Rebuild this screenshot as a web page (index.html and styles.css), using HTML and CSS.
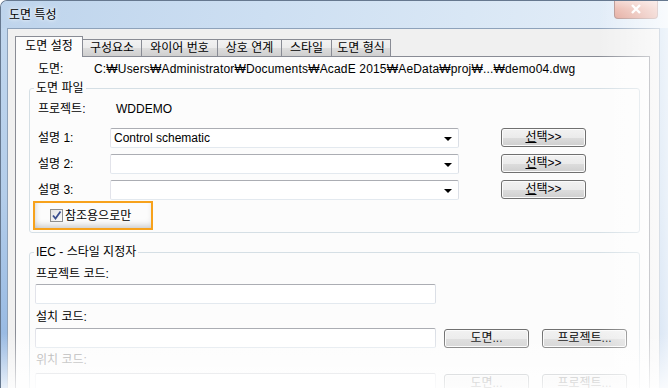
FILE: index.html
```html
<html>
  <head>
    <meta charset="UTF-8" />
    <link rel="stylesheet" href="styles.css">
  </head>
  <body>
    <div class="window">
      <div class="titlebar">
        <span class="title">도면 특성</span>
        <div class="close">
          <svg width="12" height="10" viewBox="0 0 12 10"><path d="M2 1 L10 9 M10 1 L2 9" stroke="#fff" stroke-width="2.4" /></svg>
        </div>
      </div>
      <div class="client">
        <div class="tabs">
          <div class="tab active w1">도면 설정</div>
          <div class="tab w2">구성요소</div>
          <div class="tab w3">와이어 번호</div>
          <div class="tab w4">상호 연계</div>
          <div class="tab w5">스타일</div>
          <div class="tab w6">도면 형식</div>
        </div>
        <div class="page">
          <div class="pathRow">
            <span class="pathLabel">도면:</span>
            <span class="pathValue">C:₩Users₩Administrator₩Documents₩AcadE 2015₩AeData₩proj₩...₩demo04.dwg</span>
          </div>

          <fieldset class="group">
            <legend>도면 파일</legend>
            <div class="projectRow">
              <span class="projectLabel">프로젝트:</span>
              <span>WDDEMO</span>
            </div>
            <div class="descRow first">
              <span class="descLabel">설명 1:</span>
              <div class="combo">Control schematic<span class="arrow"></span></div>
              <div class="button"><u>선</u>택&gt;&gt;</div>
            </div>
            <div class="descRow">
              <span class="descLabel">설명 2:</span>
              <div class="combo"><span class="arrow"></span></div>
              <div class="button"><u>선</u>택&gt;&gt;</div>
            </div>
            <div class="descRow">
              <span class="descLabel">설명 3:</span>
              <div class="combo"><span class="arrow"></span></div>
              <div class="button"><u>선</u>택&gt;&gt;</div>
            </div>
            <div class="checkRow">
              <span class="checkbox">
                <svg width="11" height="11" viewBox="0 0 11 11"><path d="M2 5.5 L4.5 8.5 L9.5 1.5" fill="none" stroke="#3b4f8f" stroke-width="1.8" /></svg>
              </span>
              <span>참조용으로만</span>
            </div>
          </fieldset>

          <fieldset class="group second">
            <legend>IEC - 스타일 지정자</legend>
            <div class="codeLabel l1">프로젝트 코드:</div>
            <div class="codeRow r1"><div class="input"></div></div>
            <div class="codeLabel l2">설치 코드:</div>
            <div class="codeRow r2">
              <div class="input"></div>
              <div class="button wide">도면...</div>
              <div class="button wide">프로젝트...</div>
            </div>
            <div class="codeLabel l3 disabled">위치 코드:</div>
            <div class="codeRow r3 off">
              <div class="input"></div>
              <div class="button wide">도면...</div>
              <div class="button wide">프로젝트...</div>
            </div>
          </fieldset>
        </div>
      </div>
      <div class="fadeRight"></div>
      <div class="fadeBottom"></div>
    </div>
  </body>
</html>
```

FILE: styles.css
```css
body {
  margin: 0;
  background: #fff;
  font: 12px/14px "Liberation Sans", "Noto Sans CJK KR", sans-serif;
  color: #000;
  overflow: hidden;
}
.window {
  position: relative;
  width: 668px;
  height: 388px;
  box-sizing: border-box;
  overflow: hidden;
  display: flex;
  flex-direction: column;
  padding: 0 8px 0 6px;
  border: 1px solid #66788f;
  border-right: none;
  border-bottom: none;
  border-top-left-radius: 7px;
  background: linear-gradient(to bottom, #c3d8ee 0%, #b3cdea 50%, #8fb3e0 100%);
}
.titlebar {
  flex-shrink: 0;
  height: 27px;
  margin: 0 -8px 0 -6px;
  padding-left: 8px;
  display: flex;
  align-items: center;
  background: linear-gradient(100deg, #bed4ec 0%, #cddff2 40%, #d9e7f5 70%, #e6eff9 100%);
}
.title {
  color: #000;
  text-shadow: 0 0 6px #fff, 0 0 3px #fff;
}
.close {
  position: absolute;
  top: -1px;
  right: 10px;
  width: 44px;
  height: 19px;
  box-sizing: border-box;
  border: 1px solid #b08a85;
  border-top: none;
  border-radius: 0 0 4px 4px;
  background: linear-gradient(to bottom, #f3d3cc 0%, #e9b2a6 50%, #e0a194 100%);
  display: flex;
  align-items: center;
  justify-content: center;
}
.client {
  flex: 1;
  min-height: 0;
  display: flex;
  flex-direction: column;
  background: #f0f0f0;
  border: 1px solid #8ea2ba;
  border-bottom: none;
  padding: 7px 9px 0 7px;
}
.tabs {
  flex-shrink: 0;
  display: flex;
  align-items: flex-end;
  height: 20px;
}
.tab {
  height: 17px;
  box-sizing: border-box;
  border: 1px solid #898c95;
  border-bottom: none;
  margin-left: -1px;
  text-align: center;
  line-height: 16px;
  background: linear-gradient(to bottom, #f2f2f2 0%, #ebebeb 50%, #dddddd 51%, #cfcfcf 100%);
}
.tab.active {
  height: 21px;
  margin-left: 0;
  margin-bottom: -1px;
  line-height: 19px;
  background: #fcfcfc;
  position: relative;
  z-index: 1;
}
.w1 { width: 68px; }
.w2 { width: 60px; }
.w3 { width: 77px; }
.w4 { width: 65px; }
.w5 { width: 51px; }
.w6 { width: 60px; }
.page {
  flex: 1 0 auto;
  background: #fcfcfc;
  border: 1px solid #898c95;
  border-bottom: none;
  padding: 5px 9px 0 13px;
}
.pathRow {
  display: flex;
  padding-left: 9px;
}
.pathLabel {
  width: 56px;
}
.pathValue {
  letter-spacing: 0.17px;
}
.group {
  margin: 5px 0 0;
  padding: 0 0 2px;
  border: 1px solid #d5dfe5;
  border-radius: 3px;
}
.group legend {
  margin-left: 4px;
  padding: 0 2px;
}
.group.second {
  margin-top: 12px;
}
.projectRow {
  display: flex;
  margin-top: 7px;
  padding-left: 8px;
}
.projectLabel {
  width: 78px;
}
.descRow {
  display: flex;
  align-items: flex-start;
  height: 20px;
  margin-top: 6px;
  padding-left: 8px;
}
.descRow.first {
  margin-top: 12px;
}
.descLabel {
  width: 72px;
  line-height: 20px;
}
.combo {
  position: relative;
  width: 349px;
  height: 20px;
  box-sizing: border-box;
  border: 1px solid;
  border-color: #abadb3 #dbdfe6 #e3e9ef #e2e3ea;
  border-radius: 2px;
  background: #fff;
  padding-left: 3px;
  line-height: 18px;
}
.arrow {
  position: absolute;
  right: 6px;
  top: 8px;
  border-left: 4px solid transparent;
  border-right: 4px solid transparent;
  border-top: 4px solid #000;
}
.button {
  width: 85px;
  height: 19px;
  box-sizing: border-box;
  margin-left: 42px;
  border: 1px solid #707070;
  border-radius: 3px;
  box-shadow: inset 0 0 0 1px #fbfbfb;
  background: linear-gradient(to bottom, #f2f2f2 0%, #ebebeb 50%, #dddddd 51%, #cfcfcf 100%);
  text-align: center;
  line-height: 17px;
}
.checkRow {
  display: flex;
  align-items: center;
  width: 120px;
  height: 29px;
  box-sizing: border-box;
  margin: 1px 0 0 3px;
  padding-left: 15px;
  border: 2px solid #f7a21c;
  box-shadow: inset 0 -5px 7px -3px rgba(0, 0, 0, 0.22), inset 5px 0 7px -5px rgba(0, 0, 0, 0.12);
}
.checkbox {
  width: 13px;
  height: 13px;
  box-sizing: border-box;
  border: 1px solid #8e8f8f;
  background: linear-gradient(to bottom right, #e3e3e3, #fbfbfb);
  margin-right: 2px;
  display: flex;
  align-items: center;
  justify-content: center;
}
.codeLabel {
  padding-left: 6px;
}
.l1 { margin-top: 8px; }
.l2 { margin-top: 6px; }
.l3 { margin-top: 5px; }
.codeLabel.disabled {
  color: #a3a3a3;
}
.codeRow {
  display: flex;
  align-items: center;
  margin-left: 5px;
}
.r1 { margin-top: 3px; }
.r2 { margin-top: 4px; }
.r3 { margin-top: 6px; }
.input {
  width: 401px;
  height: 20px;
  box-sizing: border-box;
  border: 1px solid;
  border-color: #abadb3 #dbdfe6 #e3e9ef #e2e3ea;
  border-radius: 2px;
  background: #fff;
}
.button.wide {
  margin-left: 8px;
}
.button.wide + .button.wide {
  margin-left: 13px;
}
.codeRow.off .input {
  border-color: #d0d3d8 #e6e8ec #eceef1 #eceef1;
}
.codeRow.off .button {
  border-color: #adb2b5;
  background: #f4f4f4;
  color: #838383;
}
.fadeRight {
  position: absolute;
  top: 0;
  right: 0;
  width: 70px;
  height: 100%;
  background: linear-gradient(to right, rgba(255, 255, 255, 0), rgba(255, 255, 255, 0.75));
}
.fadeBottom {
  position: absolute;
  left: 0;
  bottom: 0;
  width: 100%;
  height: 55px;
  background: linear-gradient(to bottom, rgba(255, 255, 255, 0), rgba(255, 255, 255, 0.8));
}
```
